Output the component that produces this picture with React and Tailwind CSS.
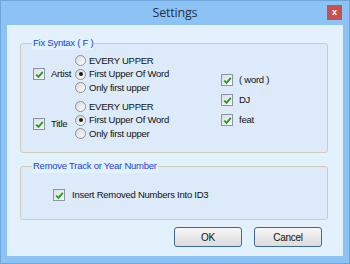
import React from 'react'

function Check() {
  return (
    <span className="flex h-[12px] w-[12px] shrink-0 items-center justify-center border border-[#8a96a3] bg-gradient-to-br from-[#d9dde2] to-[#fbfbfb]">
      <svg width="9" height="9" viewBox="0 0 9 9">
        <path d="M1.2 4.6 L3.5 6.9 L7.8 1.8" fill="none" stroke="#1f9e1f" strokeWidth="1.8" />
      </svg>
    </span>
  )
}

function Radio({ on }) {
  return (
    <span className="flex h-[11px] w-[11px] shrink-0 items-center justify-center rounded-full border border-[#8e9296] bg-gradient-to-br from-[#d6d8da] to-[#ffffff]">
      {on && <span className="h-[4px] w-[4px] rounded-full bg-[#1c1c1c]" />}
    </span>
  )
}

function RadioGroup({ sel }) {
  const items = ['EVERY UPPER', 'First Upper Of Word', 'Only first upper']
  return (
    <div className="flex flex-col">
      {items.map((t, i) => (
        <div key={t} className="flex h-[13.5px] items-center gap-[3px]">
          <Radio on={i === sel} />
          <span>{t}</span>
        </div>
      ))}
    </div>
  )
}

function Legend({ children }) {
  return (
    <span className="absolute left-[11px] top-[-8px] bg-[#e3f1fd] px-[1px] leading-[14px] text-[#1d3fd6]">
      {children}
    </span>
  )
}

export default function App() {
  return (
    <div
      className="h-[264px] w-[350px] border border-[#6da6db] bg-[#8dc3f4] text-[9.5px] tracking-[-0.25px] text-[#111]"
      style={{ fontFamily: '"Liberation Sans", Arial, sans-serif' }}
    >
      <div className="relative flex h-[24px] items-center justify-center">
        <span
          className="text-[12.5px] tracking-[-0.2px] text-[#22344a]"
          style={{ fontFamily: '"Open Sans", "Noto Sans", sans-serif' }}
        >
          Settings
        </span>
        <div className="absolute right-[7px] top-[4px] flex h-[15px] w-[15px] items-center justify-center bg-[#c8514f] text-[9px] font-bold leading-none text-white">
          x
        </div>
      </div>

      <div className="mx-[6px] flex h-[231px] flex-col bg-[#e3f1fd] pt-[18px]">
        {/* Fix Syntax */}
        <div className="relative ml-[13px] flex h-[110px] w-[308px] rounded-[3px] border border-[#cfccbb] bg-[#dceafa]">
          <Legend>Fix Syntax ( F )</Legend>
          <div className="flex w-[200px] flex-col gap-[5.5px] pl-[12px] pt-[10px]">
            <div className="flex">
              <div className="flex w-[42px] items-center gap-[6px]">
                <Check />
                <span>Artist</span>
              </div>
              <RadioGroup sel={1} />
            </div>
            <div className="flex">
              <div className="flex w-[42px] items-center gap-[6px] pt-[8px]">
                <Check />
                <span>Title</span>
              </div>
              <RadioGroup sel={1} />
            </div>
          </div>
          <div className="flex flex-col pt-[26px]">
            {['( word )', 'DJ', 'feat'].map((t) => (
              <div key={t} className="flex h-[20px] items-center gap-[6px]">
                <Check />
                <span>{t}</span>
              </div>
            ))}
          </div>
        </div>

        {/* Remove Track */}
        <div className="relative ml-[13px] mt-[13px] h-[54px] w-[308px] rounded-[3px] border border-[#cfccbb] bg-[#dceafa]">
          <Legend>Remove Track or Year Number</Legend>
          <div className="flex items-center gap-[7px] pl-[32px] pt-[21px]">
            <Check />
            <span>Insert Removed Numbers Into ID3</span>
          </div>
        </div>

        <div className="mr-[21px] mt-[7px] flex justify-end gap-[12px]">
          {['OK', 'Cancel'].map((t) => (
            <button
              key={t}
              className="flex h-[20px] w-[68px] items-center justify-center rounded-[3px] border border-[#3d6a9a] bg-gradient-to-b from-[#f6f6f6] to-[#dcdcdc] text-[10px] text-[#111]"
            >
              {t}
            </button>
          ))}
        </div>
      </div>
    </div>
  )
}
